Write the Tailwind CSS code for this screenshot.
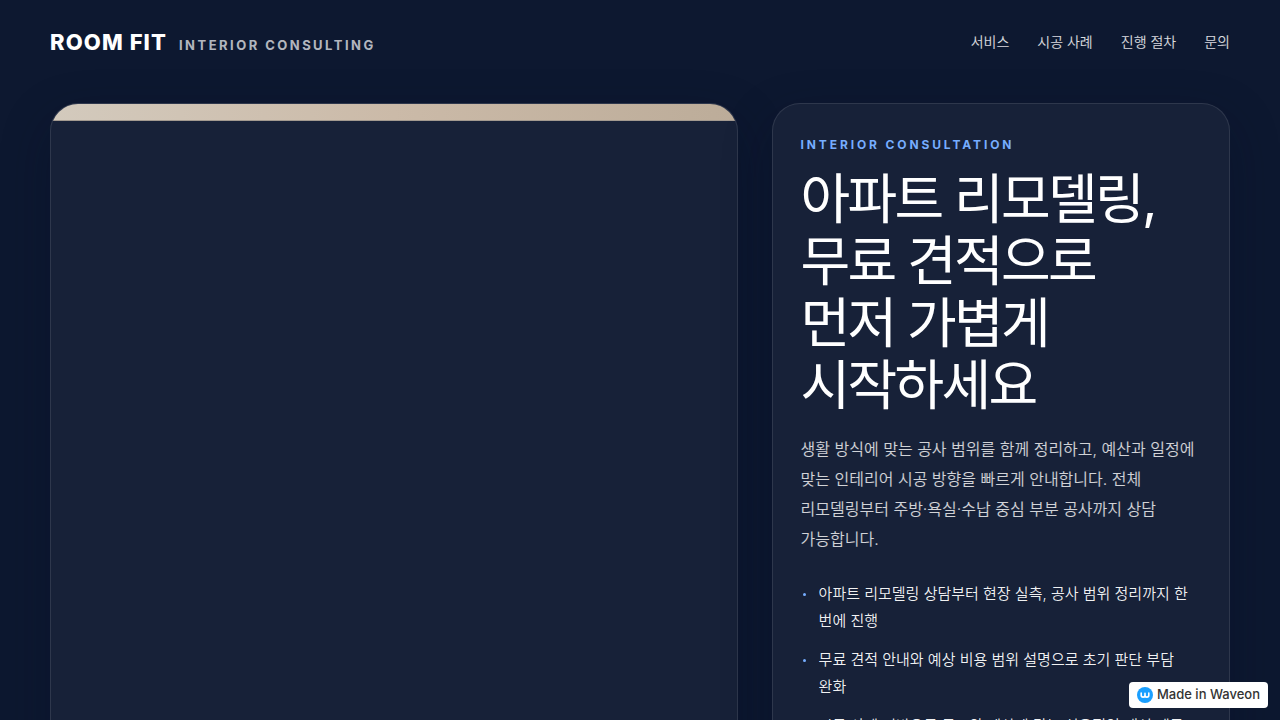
<!DOCTYPE html>
<html lang="ko">
<head>
    <meta charset="UTF-8">
    <meta name="viewport" content="width=device-width, initial-scale=1.0">
    <title>ROOM FIT</title>
    <script src="https://cdn.jsdelivr.net/npm/@tailwindcss/browser@4"></script>
</head>
<body class="h-screen overflow-hidden bg-[#0d1830] font-['Inter','Noto_Sans_CJK_KR',sans-serif] font-[350] text-white break-keep">
    <header class="flex items-center justify-between px-[50px] pt-[26px]">
        <a href="#" class="flex items-baseline gap-3">
            <span class="text-[22px] leading-8 font-extrabold tracking-[0.05em]">ROOM FIT</span>
            <span class="text-[13px] font-bold tracking-[0.19em] text-white/70">INTERIOR CONSULTING</span>
        </a>
        <nav class="flex gap-7 text-sm text-white/85">
            <a href="#services">서비스</a>
            <a href="#cases">시공 사례</a>
            <a href="#process">진행 절차</a>
            <a href="#contact">문의</a>
        </nav>
    </header>

    <main class="grid grid-cols-[1.5fr_1fr] gap-[34px] px-[50px] pt-[45px]">
        <!-- Imagen principal -->
        <section class="overflow-hidden rounded-[28px] border border-white/10 bg-[#172138] shadow-[0_18px_50px_rgba(0,12,36,0.3)]">
            <div class="h-[17px] border-b border-[#a39a90] bg-linear-to-r from-[#d3cabd] via-[#cbbaa8] to-[#bcac99]"></div>
        </section>

        <section class="rounded-[28px] border border-white/10 bg-[#172138] px-7 pt-8 pb-10 shadow-[0_18px_50px_rgba(0,12,36,0.3)]">
            <p class="text-xs leading-[18px] font-bold tracking-[0.24em] text-[#76adff]">INTERIOR CONSULTATION</p>
            <h1 class="mt-[15px] text-[54px] leading-[62px] font-normal tracking-[-0.05em]">아파트 리모델링,<br>무료 견적으로<br>먼저 가볍게<br>시작하세요</h1>
            <p class="mt-[17px] text-base leading-[30px] text-white/80">생활 방식에 맞는 공사 범위를 함께 정리하고, 예산과 일정에 맞는 인테리어 시공 방향을 빠르게 안내합니다. 전체 리모델링부터 주방·욕실·수납 중심 부분 공사까지 상담 가능합니다.</p>
            <ul class="mt-[26px] flex flex-col gap-3 text-[15px] leading-[27px] text-white/95">
                <li class="flex gap-[13px]"><span class="mt-[13px] ml-0.5 size-[3px] shrink-0 rounded-full bg-[#76adff]"></span>아파트 리모델링 상담부터 현장 실측, 공사 범위 정리까지 한 번에 진행</li>
                <li class="flex gap-[13px]"><span class="mt-[13px] ml-0.5 size-[3px] shrink-0 rounded-full bg-[#76adff]"></span>무료 견적 안내와 예상 비용 범위 설명으로 초기 판단 부담 완화</li>
                <li class="flex gap-[13px]"><span class="mt-[13px] ml-0.5 size-[3px] shrink-0 rounded-full bg-[#76adff]"></span>시공 사례 기반으로 구조와 예산에 맞는 실용적인 개선 제공</li>
            </ul>
        </section>
    </main>

    <a href="#" class="fixed right-3 bottom-3 flex h-[26px] items-center gap-1 rounded bg-white px-2 text-[13px] font-medium text-[#333]">
        <svg class="size-4" viewBox="0 0 16 16" fill="none">
            <circle cx="8" cy="8" r="8" fill="#1a9fff"/>
            <path d="M4.2 6v2.2a1.9 1.9 0 0 0 3.8 0V6.4M8 8.2a1.9 1.9 0 0 0 3.8 0V6" stroke="#fff" stroke-width="1.6" stroke-linecap="round"/>
        </svg>
        Made in Waveon
    </a>
</body>
</html>
